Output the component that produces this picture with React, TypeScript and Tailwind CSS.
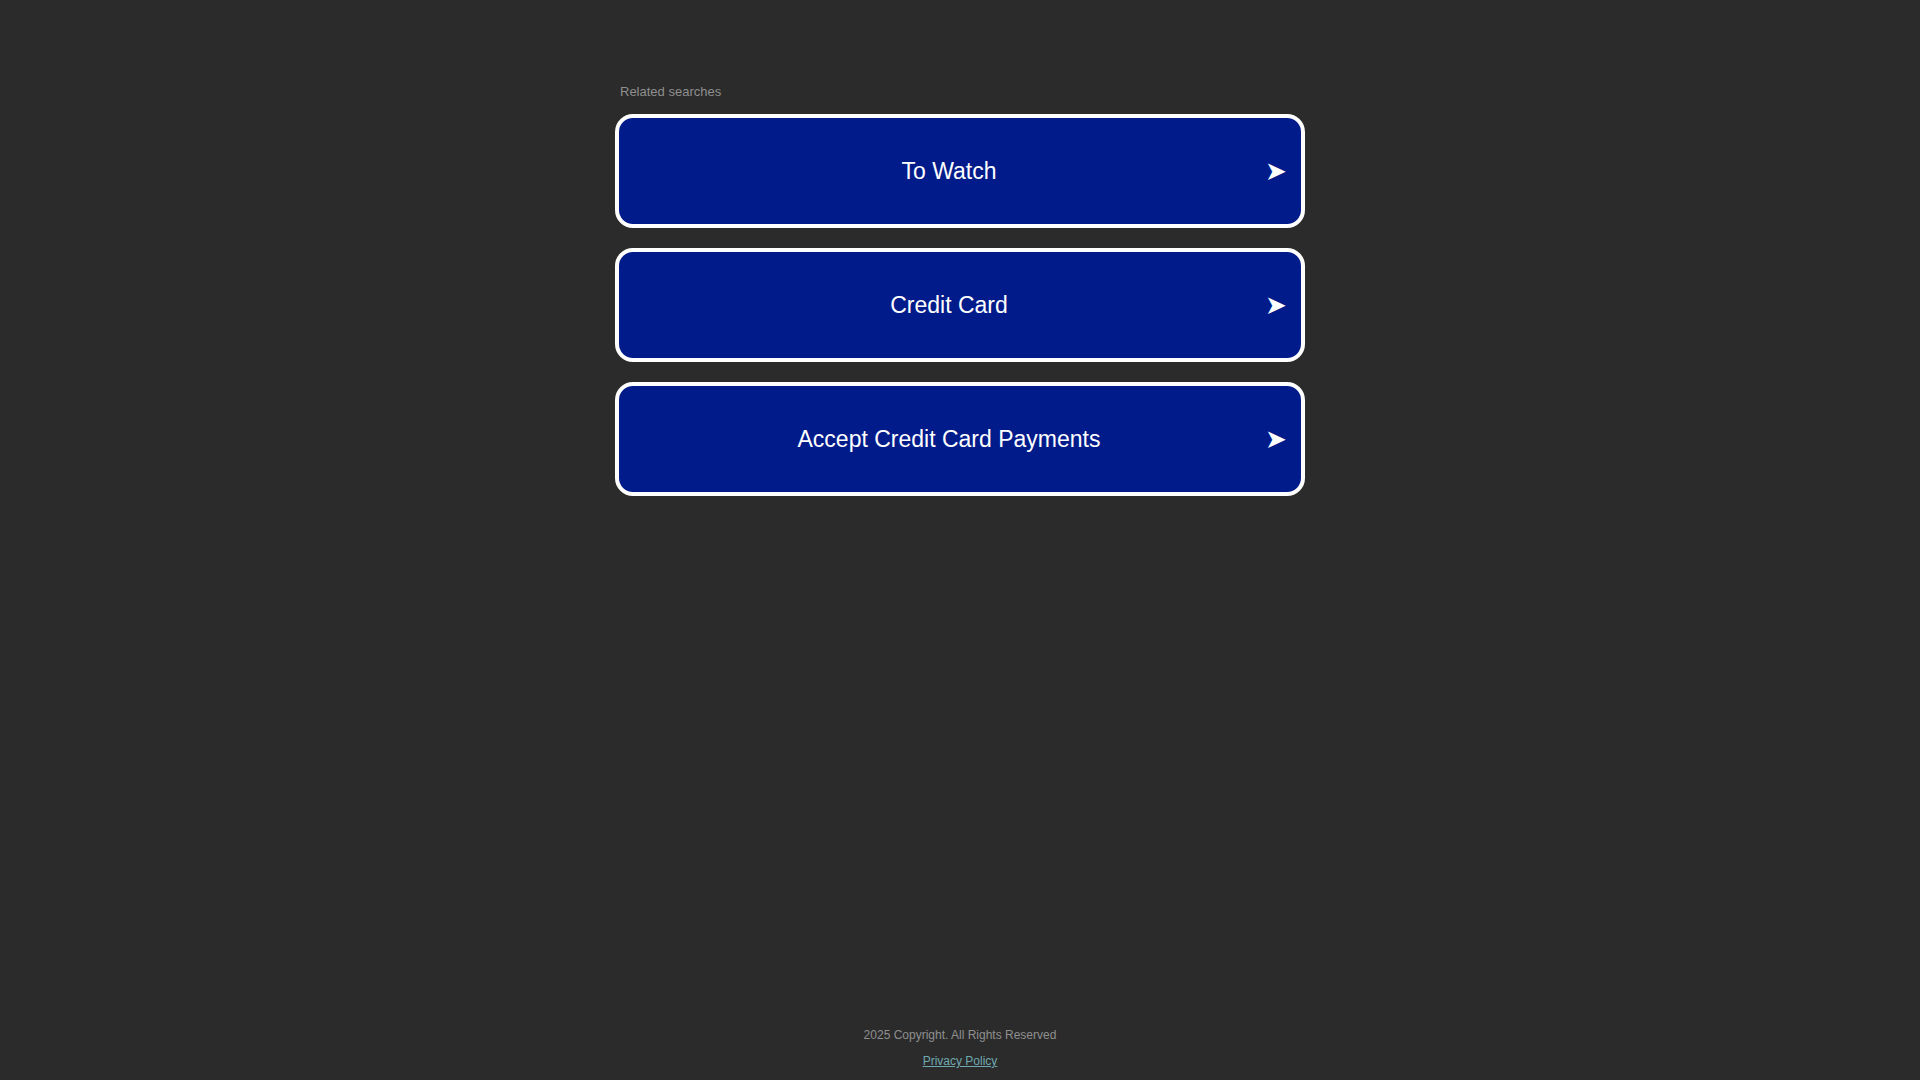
const searches = ["To Watch", "Credit Card", "Accept Credit Card Payments"];

const App = () => {
  return (
    <div
      className="h-screen w-full bg-[#2b2b2b] flex flex-col overflow-hidden"
      style={{ fontFamily: '"Liberation Sans", Arial, sans-serif' }}
    >
      <main className="flex-1 flex justify-center pt-[83px]">
        <div className="w-[690px]">
          <div className="text-[13px] leading-[18px] text-[#8f8f8f] pl-[5px] mb-[13px]">
            Related searches
          </div>

          <div className="flex flex-col gap-[20px]">
            {searches.map((label) => (
              <a
                key={label}
                href="#"
                className="h-[114px] rounded-[18px] border-[4px] border-white bg-[#011b8b] flex items-center pl-[16px] pr-[12px] text-white no-underline"
              >
                <span className="flex-1 text-center text-[23px] leading-none">{label}</span>
                <span
                  className="w-[26px] text-center text-[26px] leading-none"
                  style={{ fontFamily: '"DejaVu Sans", sans-serif' }}
                >
                  ➤
                </span>
              </a>
            ))}
          </div>
        </div>
      </main>

      <footer className="flex flex-col items-center gap-[8px] pb-[10px] text-[12px] leading-[18px]">
        <div className="text-[#8f8f8f]">2025 Copyright. All Rights Reserved</div>
        <a href="#" className="text-[#6fa9b0] underline">
          Privacy Policy
        </a>
      </footer>
    </div>
  );
};

export default App;
